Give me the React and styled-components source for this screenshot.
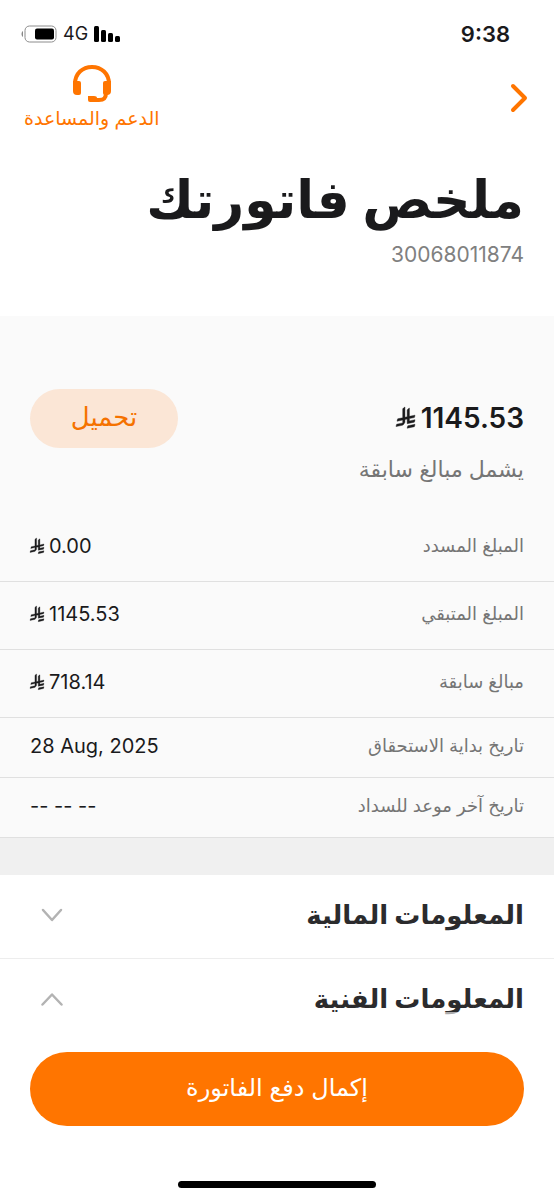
import React, { useState } from 'react';
import styled, { createGlobalStyle } from 'styled-components';

const GlobalStyle = createGlobalStyle`
  * {
    box-sizing: border-box;
  }
  body {
    margin: 0;
    background: #fff;
    color: #1a1a1c;
    font-family: Inter, "DejaVu Sans", sans-serif;
  }
  h1, h2, p, dl, dd {
    margin: 0;
  }
  button {
    font-family: inherit;
    border: 0;
    padding: 0;
    background: none;
    cursor: pointer;
  }
`;

function RiyalSign({ size }) {
  return (
    <RiyalIcon $size={size} viewBox="0 0 1124 1257" role="img" aria-label="ريال">
      <path d="M699.62 1113.02c-20.06 44.48-33.32 92.75-38.4 143.37l424.51-90.24c20.06-44.47 33.31-92.75 38.4-143.37l-424.51 90.24Z" />
      <path d="M1085.73 895.8c20.06-44.47 33.32-92.75 38.4-143.37l-330.68 70.33v-135.2l292.27-62.11c20.06-44.47 33.32-92.75 38.4-143.37l-330.68 70.27V66.13c-50.67 28.45-95.67 66.32-132.25 110.99v403.35l-132.25 28.11V0c-50.67 28.44-95.67 66.32-132.25 110.99v525.69l-295.91 62.88c-20.06 44.47-33.33 92.75-38.42 143.37l334.33-71.05v170.26l-358.3 76.14c-20.06 44.47-33.32 92.75-38.4 143.37l375.04-79.7c30.53-6.35 56.77-24.4 73.83-49.24l68.78-101.97c7.14-10.55 11.3-23.27 11.3-36.97v-149.98l132.25-28.11v270.4l424.53-90.28Z" />
    </RiyalIcon>
  );
}

function BatteryIcon() {
  return (
    <svg width="37" height="18" viewBox="0 0 37 18" aria-hidden="true">
      <path d="M3 6C1 7 1 11 3 12Z" fill="#888" />
      <rect x="5" y="1" width="31" height="16" rx="4.5" fill="none" stroke="#8c8c8c" />
      <rect x="15" y="3.5" width="19" height="11" rx="2" />
    </svg>
  );
}

function SignalIcon() {
  return (
    <svg width="26" height="17" viewBox="0 0 26 17" aria-hidden="true">
      <rect x="0" y="0" width="5" height="16" rx="1.5" />
      <rect x="7" y="4" width="5" height="12" rx="1.5" />
      <rect x="14" y="7" width="5" height="9" rx="1.5" />
      <rect x="21" y="10" width="5" height="6" rx="1.5" />
    </svg>
  );
}

function HeadsetIcon() {
  return (
    <svg width="38" height="38" viewBox="0 0 38 38" fill="none" aria-hidden="true">
      <path d="M2 19C2 8.5 9.5 2 19 2S36 8.5 36 19" stroke="#ff7500" strokeWidth="4" />
      <path d="M0 16H6Q8 16 8 18V28Q8 30 6 30H4Q0 30 0 26Z" fill="#ff7500" />
      <path d="M38 16H32Q30 16 30 18V28Q30 30 32 30H34Q38 30 38 26Z" fill="#ff7500" />
      <path d="M33 28C33 33 31 35 26 35H22" stroke="#ff7500" strokeWidth="4" />
      <path d="M15 31H21Q24 31 24 33V37H17Q15 37 15 35Z" fill="#ff7500" />
    </svg>
  );
}

function Chevron({ up }) {
  return (
    <svg width="22" height="14" viewBox="0 0 22 14" fill="none" aria-hidden="true">
      <path
        d={up ? 'M1.5 12.5L11 2.5L20.5 12.5' : 'M2 2L11 12L20 2'}
        stroke="#b3b3b3"
        strokeWidth="2.5"
        strokeLinecap="round"
        strokeLinejoin="round"
      />
    </svg>
  );
}

const rows = [
  { label: 'المبلغ المسدد', value: '0.00', money: true },
  { label: 'المبلغ المتبقي', value: '1145.53', money: true },
  { label: 'مبالغ سابقة', value: '718.14', money: true },
  { label: 'تاريخ بداية الاستحقاق', value: '28 Aug, 2025' },
  { label: 'تاريخ آخر موعد للسداد', value: '-- -- --' },
];

export default function App() {
  const [open, setOpen] = useState('technical');
  const toggle = (name) => setOpen(open === name ? null : name);

  return (
    <Page dir="rtl" lang="ar">
      <GlobalStyle />
      <StatusBar dir="ltr">
        <StatusGroup>
          <BatteryIcon />
          <Network>4G</Network>
          <SignalIcon />
        </StatusGroup>
        <Clock>9:38</Clock>
      </StatusBar>

      <NavBar>
        <BackButton aria-label="رجوع">
          <svg width="18" height="30" viewBox="0 0 18 30" fill="none" aria-hidden="true">
            <path d="M3 3L15 15L3 27" stroke="#ff7500" strokeWidth="4" strokeLinecap="round" strokeLinejoin="round" />
          </svg>
        </BackButton>
        <SupportLink href="#support">
          <HeadsetIcon />
          <span>الدعم والمساعدة</span>
        </SupportLink>
      </NavBar>

      <Heading>
        <Title>ملخص فاتورتك</Title>
        <Account>30068011874</Account>
      </Heading>

      <Summary>
        <Total>
          <div>
            <TotalAmount dir="ltr">
              <RiyalSign size={19} />
              1145.53
            </TotalAmount>
            <TotalNote>يشمل مبالغ سابقة</TotalNote>
          </div>
          <DownloadButton>تحميل</DownloadButton>
        </Total>
        <dl>
          {rows.map((row) => (
            <Row key={row.label} $tall={row.money}>
              <Label>{row.label}</Label>
              <Value dir="ltr">
                {row.money && <RiyalSign size={14} />}
                {row.value}
              </Value>
            </Row>
          ))}
        </dl>
      </Summary>

      <Divider />

      <Section>
        <SectionButton aria-expanded={open === 'financial'} onClick={() => toggle('financial')}>
          <SectionTitle>المعلومات المالية</SectionTitle>
          <Chevron up={open === 'financial'} />
        </SectionButton>
      </Section>
      <Section>
        <SectionButton aria-expanded={open === 'technical'} onClick={() => toggle('technical')}>
          <SectionTitle>المعلومات الفنية</SectionTitle>
          <Chevron up={open === 'technical'} />
        </SectionButton>
      </Section>

      <Footer>
        <PayButton>إكمال دفع الفاتورة</PayButton>
        <HomeIndicator />
      </Footer>
    </Page>
  );
}

const Page = styled.div`
  min-height: 100vh;
  padding-bottom: 156px;
`;

const StatusBar = styled.div`
  display: flex;
  align-items: center;
  justify-content: space-between;
  height: 64px;
  padding: 4px 44px 0 20px;
`;

const StatusGroup = styled.div`
  display: flex;
  align-items: center;
  gap: 6px;
`;

const Network = styled.span`
  font-size: 18px;
  line-height: 24px;
`;

const Clock = styled.span`
  font-size: 22px;
  font-weight: 600;
  line-height: 24px;
`;

const NavBar = styled.header`
  display: flex;
  align-items: center;
  justify-content: space-between;
  height: 68px;
  padding: 0 26px 0 24px;
`;

const BackButton = styled.button`
  display: flex;
`;

const SupportLink = styled.a`
  display: flex;
  flex-direction: column;
  align-items: center;
  gap: 4px;
  color: #ff7500;
  font-size: 19px;
  line-height: 24px;
  text-decoration: none;
`;

const Heading = styled.div`
  height: 184px;
  padding: 30px 30px 0;
`;

const Title = styled.h1`
  margin-bottom: 2px;
  font-size: 52px;
  font-weight: 700;
  line-height: 76px;
`;

const Account = styled.p`
  color: #808080;
  font-size: 21px;
  line-height: 30px;
`;

const Summary = styled.section`
  padding-top: 73px;
  background: #fafafa;
`;

const Total = styled.div`
  display: flex;
  align-items: flex-start;
  justify-content: space-between;
  height: 125px;
  padding: 0 30px;
`;

const TotalAmount = styled.p`
  display: flex;
  align-items: center;
  justify-content: flex-end;
  gap: 6px;
  font-size: 28px;
  font-weight: 600;
  line-height: 58px;
`;

const TotalNote = styled.p`
  color: #757575;
  font-size: 22px;
  line-height: 44px;
`;

const DownloadButton = styled.button`
  width: 148px;
  height: 59px;
  padding-bottom: 4px;
  border-radius: 30px;
  background: #fbe6d6;
  color: #f57200;
  font-size: 26px;
`;

const Row = styled.div`
  display: flex;
  align-items: center;
  justify-content: space-between;
  height: ${(props) => (props.$tall ? '68px' : '60px')};
  padding: 0 30px 4px;
  border-bottom: 1px solid #e0e0e0;
`;

const Label = styled.dt`
  color: #757575;
  font-size: 18px;
`;

const Value = styled.dd`
  display: flex;
  align-items: center;
  gap: 5px;
  font-size: 20px;
`;

const RiyalIcon = styled.svg`
  width: ${(props) => props.$size}px;
  flex: none;
  overflow: visible;
  fill: currentColor;
  stroke: currentColor;
  stroke-width: 24;
`;

const Divider = styled.div`
  height: 37px;
  background: #f0f0f0;
`;

const Section = styled.section`
  border-bottom: 1px solid #ededed;

  &:last-of-type {
    border-bottom: 0;
  }
`;

const SectionButton = styled.button`
  display: flex;
  align-items: center;
  justify-content: space-between;
  width: 100%;
  height: 83px;
  padding: 0 30px 4px 41px;
  color: #2b2b2d;
`;

const SectionTitle = styled.h2`
  font-size: 26px;
  font-weight: 700;
`;

const Footer = styled.footer`
  position: fixed;
  right: 0;
  bottom: 0;
  left: 0;
  display: flex;
  flex-direction: column;
  align-items: center;
  gap: 55px;
  padding: 40px 30px 12px;
  background: rgba(255, 255, 255, 0.6);
`;

const PayButton = styled.button`
  width: 100%;
  height: 74px;
  padding-bottom: 4px;
  border-radius: 37px;
  background: #ff7500;
  color: #fff;
  font-size: 24px;
`;

const HomeIndicator = styled.div`
  width: 198px;
  height: 7px;
  border-radius: 4px;
  background: #000;
`;
